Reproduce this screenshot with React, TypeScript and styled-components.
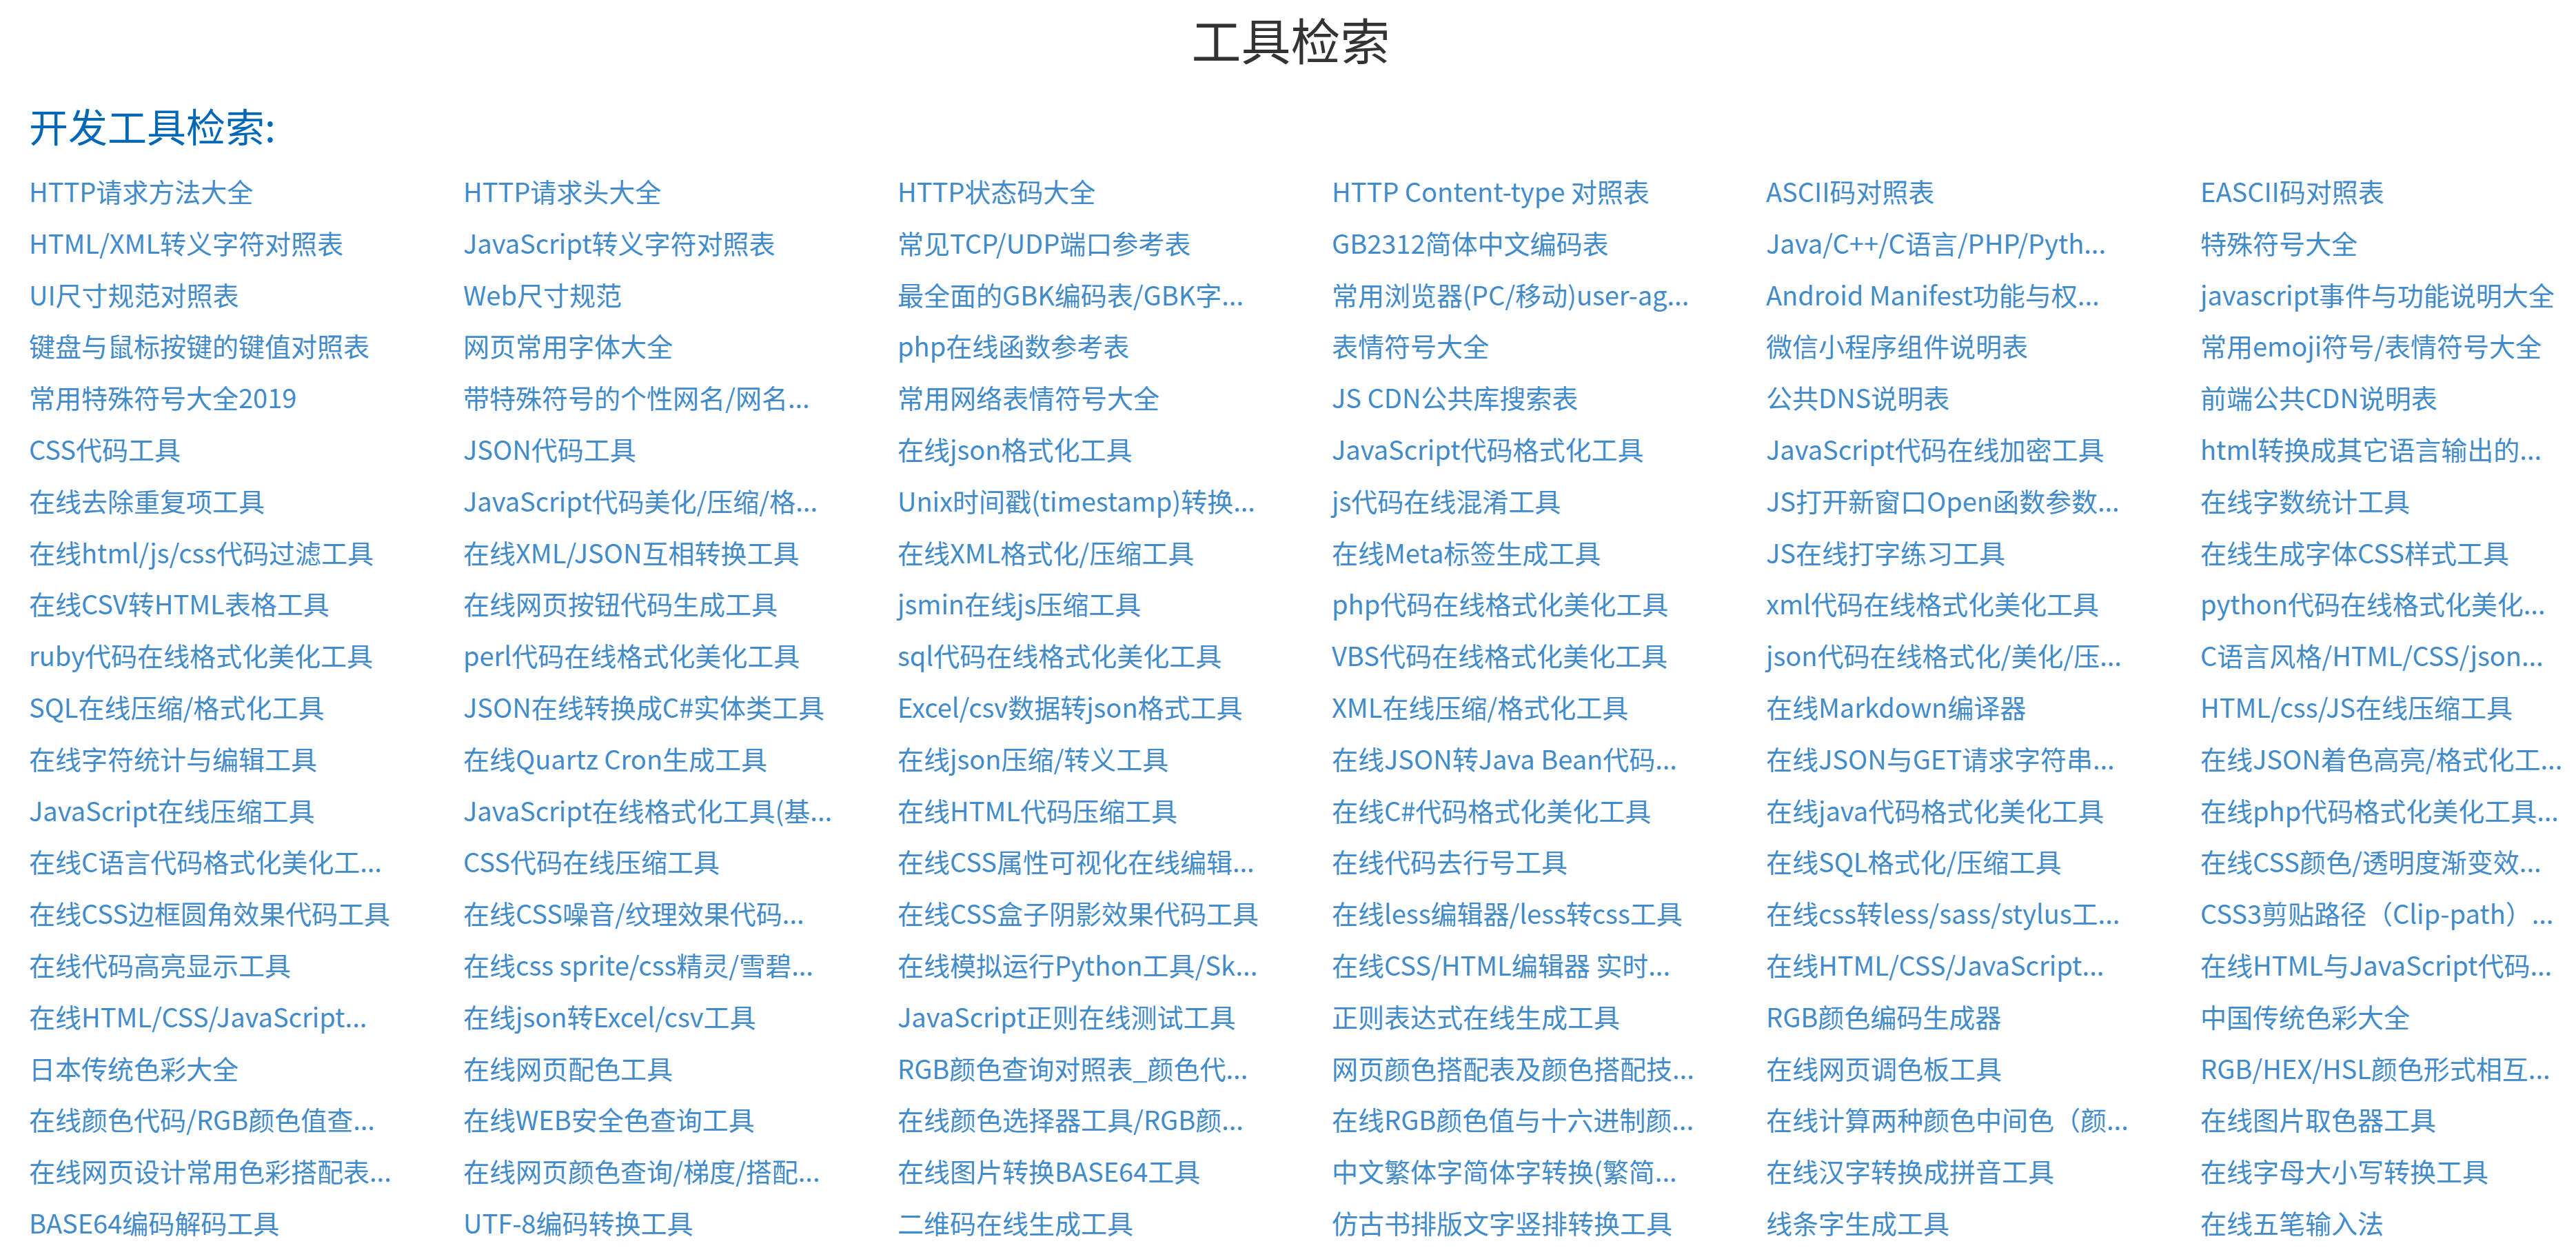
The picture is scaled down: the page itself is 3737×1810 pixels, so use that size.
import styled, { createGlobalStyle } from 'styled-components';

const tools: string[] = [
  'HTTP请求方法大全', 'HTTP请求头大全', 'HTTP状态码大全', 'HTTP Content-type 对照表', 'ASCII码对照表', 'EASCII码对照表',
  'HTML/XML转义字符对照表', 'JavaScript转义字符对照表', '常见TCP/UDP端口参考表', 'GB2312简体中文编码表', 'Java/C++/C语言/PHP/Pyth...', '特殊符号大全',
  'UI尺寸规范对照表', 'Web尺寸规范', '最全面的GBK编码表/GBK字...', '常用浏览器(PC/移动)user-ag...', 'Android Manifest功能与权...', 'javascript事件与功能说明大全',
  '键盘与鼠标按键的键值对照表', '网页常用字体大全', 'php在线函数参考表', '表情符号大全', '微信小程序组件说明表', '常用emoji符号/表情符号大全',
  '常用特殊符号大全2019', '带特殊符号的个性网名/网名...', '常用网络表情符号大全', 'JS CDN公共库搜索表', '公共DNS说明表', '前端公共CDN说明表',
  'CSS代码工具', 'JSON代码工具', '在线json格式化工具', 'JavaScript代码格式化工具', 'JavaScript代码在线加密工具', 'html转换成其它语言输出的...',
  '在线去除重复项工具', 'JavaScript代码美化/压缩/格...', 'Unix时间戳(timestamp)转换...', 'js代码在线混淆工具', 'JS打开新窗口Open函数参数...', '在线字数统计工具',
  '在线html/js/css代码过滤工具', '在线XML/JSON互相转换工具', '在线XML格式化/压缩工具', '在线Meta标签生成工具', 'JS在线打字练习工具', '在线生成字体CSS样式工具',
  '在线CSV转HTML表格工具', '在线网页按钮代码生成工具', 'jsmin在线js压缩工具', 'php代码在线格式化美化工具', 'xml代码在线格式化美化工具', 'python代码在线格式化美化...',
  'ruby代码在线格式化美化工具', 'perl代码在线格式化美化工具', 'sql代码在线格式化美化工具', 'VBS代码在线格式化美化工具', 'json代码在线格式化/美化/压...', 'C语言风格/HTML/CSS/json...',
  'SQL在线压缩/格式化工具', 'JSON在线转换成C#实体类工具', 'Excel/csv数据转json格式工具', 'XML在线压缩/格式化工具', '在线Markdown编译器', 'HTML/css/JS在线压缩工具',
  '在线字符统计与编辑工具', '在线Quartz Cron生成工具', '在线json压缩/转义工具', '在线JSON转Java Bean代码...', '在线JSON与GET请求字符串...', '在线JSON着色高亮/格式化工...',
  'JavaScript在线压缩工具', 'JavaScript在线格式化工具(基...', '在线HTML代码压缩工具', '在线C#代码格式化美化工具', '在线java代码格式化美化工具', '在线php代码格式化美化工具...',
  '在线C语言代码格式化美化工...', 'CSS代码在线压缩工具', '在线CSS属性可视化在线编辑...', '在线代码去行号工具', '在线SQL格式化/压缩工具', '在线CSS颜色/透明度渐变效...',
  '在线CSS边框圆角效果代码工具', '在线CSS噪音/纹理效果代码...', '在线CSS盒子阴影效果代码工具', '在线less编辑器/less转css工具', '在线css转less/sass/stylus工...', 'CSS3剪贴路径（Clip-path）...',
  '在线代码高亮显示工具', '在线css sprite/css精灵/雪碧...', '在线模拟运行Python工具/Sk...', '在线CSS/HTML编辑器 实时...', '在线HTML/CSS/JavaScript...', '在线HTML与JavaScript代码...',
  '在线HTML/CSS/JavaScript...', '在线json转Excel/csv工具', 'JavaScript正则在线测试工具', '正则表达式在线生成工具', 'RGB颜色编码生成器', '中国传统色彩大全',
  '日本传统色彩大全', '在线网页配色工具', 'RGB颜色查询对照表_颜色代...', '网页颜色搭配表及颜色搭配技...', '在线网页调色板工具', 'RGB/HEX/HSL颜色形式相互...',
  '在线颜色代码/RGB颜色值查...', '在线WEB安全色查询工具', '在线颜色选择器工具/RGB颜...', '在线RGB颜色值与十六进制颜...', '在线计算两种颜色中间色（颜...', '在线图片取色器工具',
  '在线网页设计常用色彩搭配表...', '在线网页颜色查询/梯度/搭配...', '在线图片转换BASE64工具', '中文繁体字简体字转换(繁简...', '在线汉字转换成拼音工具', '在线字母大小写转换工具',
  'BASE64编码解码工具', 'UTF-8编码转换工具', '二维码在线生成工具', '仿古书排版文字竖排转换工具', '线条字生成工具', '在线五笔输入法',
];

const GlobalStyle = createGlobalStyle`
  html, body {
    margin: 0;
    padding: 0;
    background: #fff;
    overflow-x: hidden;
  }
  body {
    font-family: "Noto Sans CJK SC", "Microsoft YaHei", sans-serif;
  }
`;

export default function App() {
  return (
    <>
      <GlobalStyle />
      <Page>
        <Title>工具检索</Title>
        <Section>
          <SectionTitle>开发工具检索:</SectionTitle>
          <ToolList>
            {tools.map((name, i) => (
              <ToolItem key={i}>
                <ToolLink href="#" title={name}>
                  {name}
                </ToolLink>
              </ToolItem>
            ))}
          </ToolList>
        </Section>
      </Page>
    </>
  );
}

const Page = styled.div`
  padding: 0 0 40px 42px;
`;

const Title = styled.h1`
  margin: 0;
  padding-right: 34px;
  font-size: 72px;
  font-weight: normal;
  line-height: 112px;
  color: #333;
  text-align: center;
`;

const Section = styled.section`
  margin-top: 29px;
`;

const SectionTitle = styled.h2`
  margin: 0 0 19px;
  font-size: 57px;
  font-weight: normal;
  line-height: 80px;
  color: #0068b7;
`;

const ToolList = styled.ul`
  display: grid;
  grid-template-columns: repeat(6, 630px);
  grid-auto-rows: 74.8px;
  margin: 0;
  padding: 0;
  list-style: none;
`;

const ToolItem = styled.li`
  display: flex;
  align-items: center;
  white-space: nowrap;
`;

const ToolLink = styled.a`
  display: block;
  font-size: 38px;
  line-height: 74.8px;
  color: #428bca;
  text-decoration: none;
`;
